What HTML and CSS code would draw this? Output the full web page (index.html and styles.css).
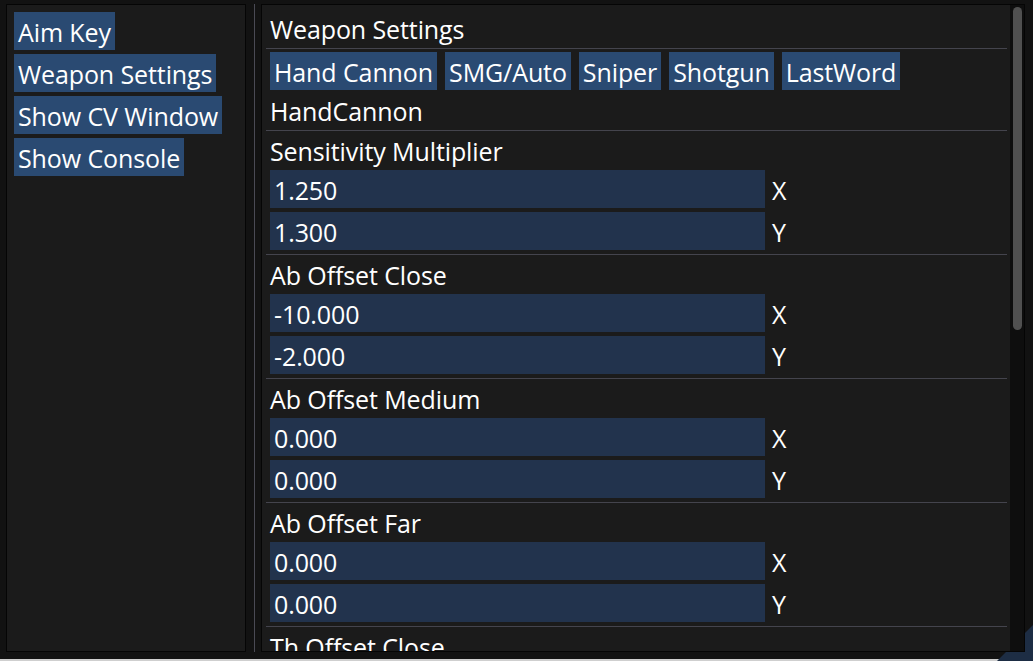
FILE: index.html
```
<!DOCTYPE html>
<html>
<head>
<meta charset="utf-8">
<link rel="stylesheet" href="styles.css">
</head>
<body>
<div class="window">
  <div class="panel side">
    <div class="btn">Aim Key</div>
    <div class="btn">Weapon Settings</div>
    <div class="btn">Show CV Window</div>
    <div class="btn">Show Console</div>
  </div>
  <div class="vsep"></div>
  <div class="panel main">
    <div class="content">
      <div class="text">Weapon Settings</div>
      <div class="sep"></div>
      <div class="tabs">
        <div class="btn">Hand Cannon</div>
        <div class="btn">SMG/Auto</div>
        <div class="btn">Sniper</div>
        <div class="btn">Shotgun</div>
        <div class="btn">LastWord</div>
      </div>
      <div class="text">HandCannon</div>
      <div class="sep"></div>

      <div class="text">Sensitivity Multiplier</div>
      <div class="field"><div class="input">1.250</div><span class="axis">X</span></div>
      <div class="field"><div class="input">1.300</div><span class="axis">Y</span></div>
      <div class="sep"></div>

      <div class="text">Ab Offset Close</div>
      <div class="field"><div class="input">-10.000</div><span class="axis">X</span></div>
      <div class="field"><div class="input">-2.000</div><span class="axis">Y</span></div>
      <div class="sep"></div>

      <div class="text">Ab Offset Medium</div>
      <div class="field"><div class="input">0.000</div><span class="axis">X</span></div>
      <div class="field"><div class="input">0.000</div><span class="axis">Y</span></div>
      <div class="sep"></div>

      <div class="text">Ab Offset Far</div>
      <div class="field"><div class="input">0.000</div><span class="axis">X</span></div>
      <div class="field"><div class="input">0.000</div><span class="axis">Y</span></div>
      <div class="sep"></div>

      <div class="text">Th Offset Close</div>
    </div>
    <div class="scrollbar"><div class="grab"></div></div>
  </div>
</div>
<div class="grip"></div>
</body>
</html>
```
FILE: styles.css
```
html, body {
  margin: 0;
  padding: 0;
}
body {
  width: 1033px;
  height: 661px;
  overflow: hidden;
  background: #cfcfcf;
  font-family: "Open Sans", "Noto Sans", sans-serif;
  font-size: 25px;
  letter-spacing: -0.1px;
  color: #ffffff;
  position: relative;
}
.window {
  height: 659px;
  box-sizing: border-box;
  background: #121212;
  display: flex;
  align-items: flex-start;
  padding: 4px 0 0 6px;
}
.panel {
  position: relative;
  z-index: 2;
  box-sizing: border-box;
  height: 648px;
  border: 1px solid #050505;
  background: #1b1b1b;
}
.side {
  width: 240px;
  padding: 7px;
  display: flex;
  flex-direction: column;
  align-items: flex-start;
  gap: 4px;
}
.btn {
  height: 38px;
  line-height: 40px;
  padding: 0 4px;
  background: #2a4a72;
  white-space: nowrap;
}
.vsep {
  width: 1px;
  height: 648px;
  margin: 0 6px 0 8px;
  background: #4a4a54;
}
.main {
  width: 764px;
  display: flex;
  overflow: hidden;
}
.content {
  flex: 1;
  min-width: 0;
  padding: 7px 7px 0 8px;
  display: flex;
  flex-direction: column;
  gap: 4px;
  overflow: hidden;
}
.text {
  height: 32px;
  line-height: 34px;
  white-space: nowrap;
  flex: none;
}
.sep {
  flex: none;
  height: 1px;
  margin: 0 -4px -1px -4px;
  background: #44444d;
}
.tabs {
  display: flex;
  gap: 8px;
  flex: none;
}
.field {
  display: flex;
  align-items: center;
  height: 38px;
  flex: none;
}
.input {
  width: 495px;
  height: 38px;
  line-height: 40px;
  box-sizing: border-box;
  padding: 0 4px;
  background: #22334d;
}
.axis {
  margin-left: 7px;
  line-height: 40px;
  height: 38px;
}
.scrollbar {
  width: 14px;
  flex: none;
  background: #0e0e0e;
  padding-top: 2px;
  box-sizing: border-box;
}
.grab {
  width: 9px;
  height: 323px;
  margin-left: 3px;
  border-radius: 5px;
  background: #505050;
}
.grip {
  position: absolute;
  right: 0;
  bottom: 0;
  width: 36px;
  height: 36px;
  z-index: 1;
  background: #1d2d44;
  clip-path: polygon(100% 0, 100% 100%, 0 100%);
}
```
